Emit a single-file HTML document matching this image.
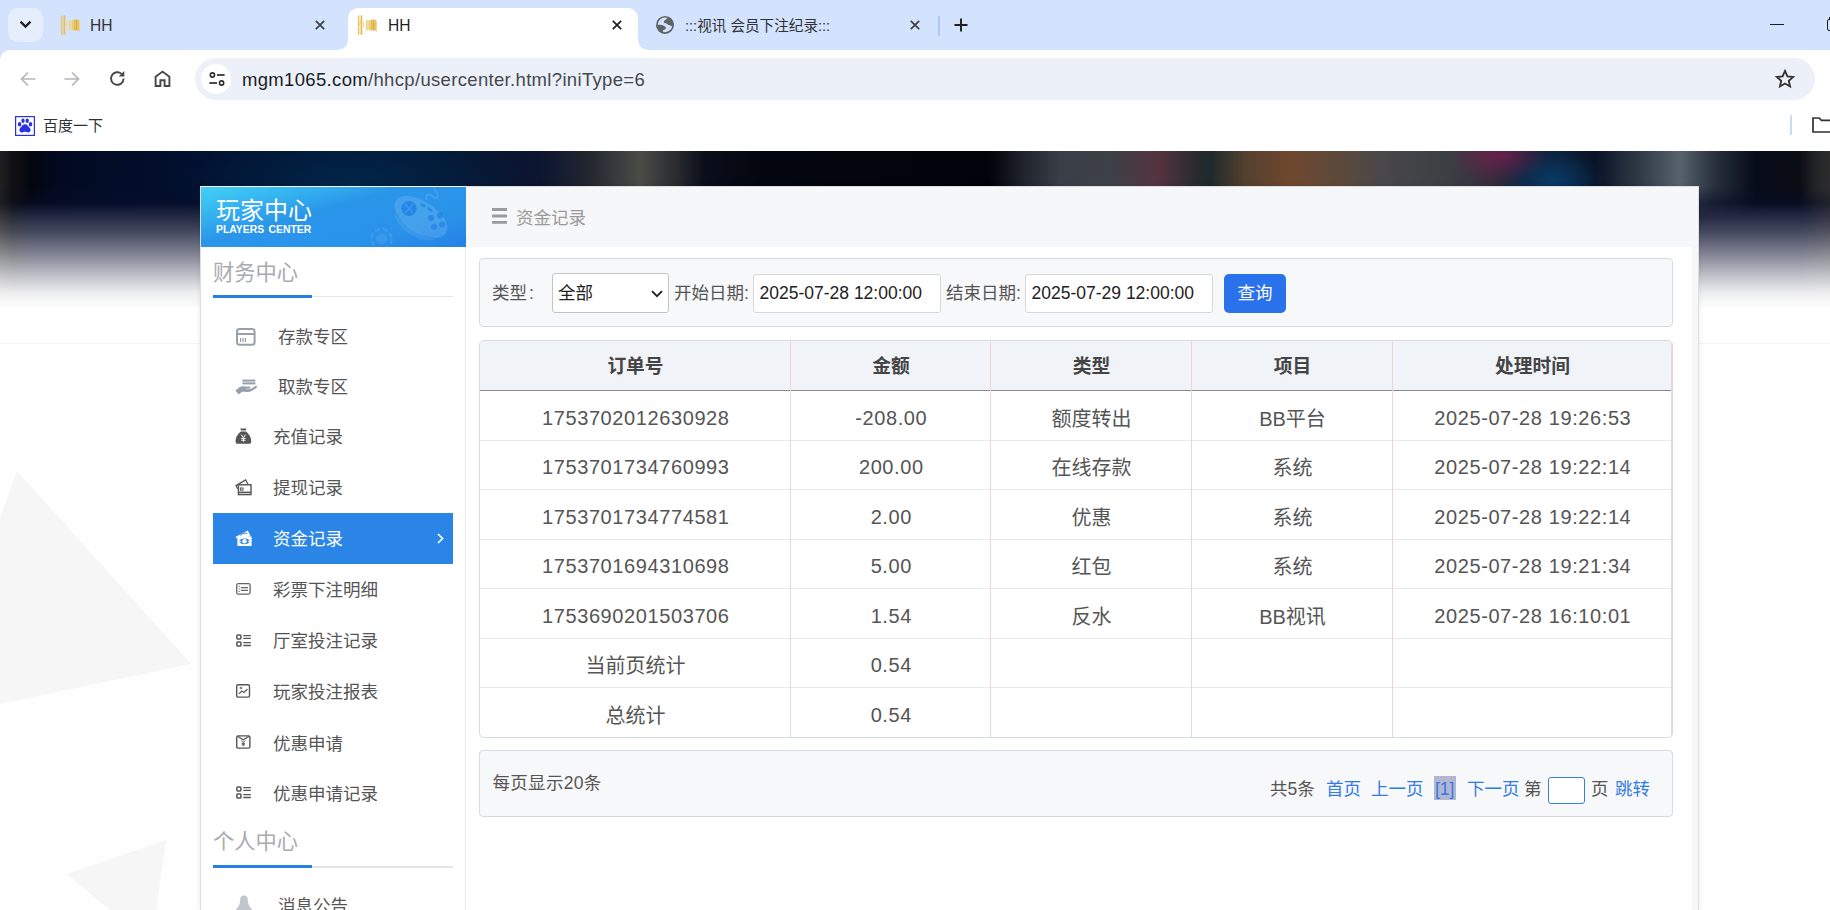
<!DOCTYPE html>
<html lang="zh-CN">
<head>
<meta charset="utf-8">
<title>HH</title>
<style>
*{box-sizing:border-box;margin:0;padding:0}
html,body{width:1830px;height:910px;overflow:hidden;background:#fff}
body{position:relative;font-family:"Liberation Sans","Noto Sans CJK SC",sans-serif;color:#555;-webkit-font-smoothing:antialiased}
.abs{position:absolute}
svg{display:block;position:absolute;overflow:visible}
/* ---------- browser chrome ---------- */
#tabstrip{left:0;top:0;width:1830px;height:64px;background:#d3e3fd}
#toolbar{left:0;top:50px;width:1830px;height:101px;background:#fff;border-top-left-radius:10px}
#tabsearch{left:8px;top:8px;width:35px;height:34px;border-radius:10px;background:#e6edfc}
.tabtxt{top:15.5px;height:20px;line-height:20px;font-size:15.6px;color:#303133;white-space:nowrap}
#acttab{left:348px;top:8px;width:290px;height:42px;background:#fff;border-radius:10px 10px 0 0}
.flare{width:10px;height:10px;top:40px;background:#fff}
.flare i{display:block;width:10px;height:10px;background:#d3e3fd}
#omni{left:195px;top:58px;width:1620px;height:41.5px;border-radius:21px;background:#ecf0f9}
#siteinfo{left:201px;top:64px;width:30px;height:30px;border-radius:15px;background:#fff}
#url{left:242px;top:68px;height:24px;line-height:24px;font-size:18.5px;color:#45484d;white-space:nowrap;letter-spacing:.33px}
#url b{font-weight:normal;color:#1b1c1f}
#bm{left:43px;top:116px;height:20px;line-height:20px;font-size:15px;color:#303133;white-space:nowrap}
/* ---------- page ---------- */
#page{left:0;top:151px;width:1830px;height:759px;background:#fefefe;overflow:hidden}
#banner{left:0;top:0;width:1830px;height:192px}
#banner{background:
 linear-gradient(to right,rgba(30,30,32,.9) 0,rgba(14,14,18,.6) 12px,rgba(8,10,20,0) 32px,rgba(8,10,20,0) 1802px,rgba(36,36,38,.55) 1830px),
 linear-gradient(to bottom,rgba(7,13,42,0) 0,rgba(7,13,42,0) 36px,rgba(7,13,42,.5) 50px,rgba(7,13,42,1) 66px,rgba(7,13,42,1) 100%),
 radial-gradient(ellipse 50px 26px at 1500px 4px,rgba(120,30,80,.75),rgba(120,30,80,0) 100%),
 radial-gradient(ellipse 50px 30px at 1555px 30px,rgba(8,62,110,.8),rgba(8,62,110,0) 100%),
 radial-gradient(ellipse 170px 70px at 350px 34px,rgba(0,44,80,.75),rgba(0,44,80,0) 100%),
 linear-gradient(to right,#2c2c2e 0,#101114 14px,#04060f 30px,#020a22 60px,#021030 200px,#031634 420px,#0c1530 540px,#23272f 590px,#4b4c47 640px,#2a2c30 675px,#0a0e1a 705px,#04060f 760px,#02030a 990px,#1c2028 1020px,#3a3f47 1060px,#3e4148 1110px,#55343f 1158px,#2a2a2e 1195px,#1d2a2b 1210px,#54402f 1245px,#70472f 1290px,#5c4a3b 1340px,#48474a 1385px,#3b3e43 1450px,#3a2c3c 1490px,#14233c 1525px,#0b2440 1555px,#091226 1595px,#2c3642 1635px,#57626d 1680px,#27303c 1715px,#070b1a 1755px,#0b0d14 1800px,#363636 1830px)}#fade{left:0;top:0;width:1830px;height:192px;background:linear-gradient(to bottom,rgba(255,255,255,0) 0,rgba(255,255,255,0) 52px,rgba(255,255,255,.26) 82px,rgba(255,255,255,.5) 104px,rgba(255,255,255,.76) 126px,rgba(255,255,255,.93) 142px,#fff 158px,#fff 100%)}
/* ---------- container ---------- */
#wrap{left:200px;top:186px;width:1499px;height:724px;background:#f6f7f9;border-top:1px solid #dcdddf;border-right:1px solid #dedede;box-shadow:0 0 5px rgba(0,0,0,.09)}
#side{left:200px;top:186px;width:266px;height:724px;background:#fff;border-left:1px solid #dedede;border-right:1px solid #e9ebee}
#logo{left:201px;top:186.600px;width:265px;height:60.4px;background:linear-gradient(165deg,#43d0f6 0,#35b4f0 22%,#2a96ea 42%,#2992e9 75%,#2480e6 100%);overflow:hidden}
#logo .t1{left:15px;top:9px;font-size:24px;line-height:30px;color:#fff;white-space:nowrap}
#logo .t2{left:15px;top:36px;font-size:10.4px;line-height:14px;color:#fff;white-space:nowrap;letter-spacing:0;word-spacing:1.5px;font-weight:bold}
.sect{left:213px;height:30px;line-height:30px;font-size:21.25px;color:#a9abb0;white-space:nowrap}
.sline{left:213px;width:240px;height:1px;background:#e3e4e6}
.sline i{display:block;position:absolute;left:0;top:-1.1px;width:98.500px;height:2.6px;background:#2a7de4}
.mi{left:213px;width:240px;height:51px;line-height:51px;font-size:17.5px;color:#555;white-space:nowrap}
.mi span{position:absolute;top:0}
.mi.on{background:#2a85e6;color:#fff}
#main{left:466px;top:247px;width:1226px;height:663px;background:#fff}
#mh{left:516px;top:203px;height:30px;line-height:30px;font-size:17.5px;color:#9a9a9a;white-space:nowrap}
.box{left:479px;width:1194px;background:#f7f8fa;border:1px solid #d6dbe1;border-radius:4px}
.lab{top:277.7px;height:30px;line-height:30px;font-size:17.5px;color:#555;white-space:nowrap}
.inp{top:274px;height:38.5px;background:#fff;border:1px solid #d6d8db;border-radius:3px;font-size:17.5px;line-height:36px;color:#222;padding-left:5.5px;white-space:nowrap}
#btn{left:1224px;top:274px;width:62px;height:39px;border-radius:5px;background:#2a71ec;color:#fff;font-size:17.5px;line-height:39px;text-align:center}
/* ---------- table ---------- */
#tb{left:479px;top:340px;width:1194px;height:398px;background:#fff;border:1px solid #d6dbe1;border-radius:5px;overflow:hidden}
#th{left:0;top:0;width:1192px;height:50.3px;background:#f0f3f7;border-bottom:1.4px solid #8f898c}
.vl{top:0;width:1px;height:398px;background:#f1d3d5}
.hl{left:0;width:1192px;height:1px;background:#e9e9ea}
.c{height:30px;line-height:30px;text-align:center;white-space:nowrap;font-size:20px;color:#555}
.c{margin-top:2px}
.c.h{font-size:18.75px;font-weight:bold;color:#444;margin-top:.8px}
.c.n{letter-spacing:.6px;margin-top:1px;padding-left:.6px}
.c1{left:0;width:311px}.c2{left:311px;width:200px}.c3{left:511px;width:201px}.c4{left:712px;width:201px}.c5{left:913px;width:279px}
.pg{top:774px;height:30px;line-height:30px;font-size:17.5px;color:#555;white-space:nowrap}
.pg.a{color:#347ae6}
</style>
</head>
<body>
<!-- ======= CHROME ======= -->
<div id="tabstrip" class="abs"></div>
<div id="toolbar" class="abs"></div>
<div id="tabsearch" class="abs"></div>
<div id="acttab" class="abs"></div>
<div id="omni" class="abs"></div>
<div id="siteinfo" class="abs"></div>
<div id="url" class="abs"><b>mgm1065.com</b>/hhcp/usercenter.html?iniType=6</div>
<div id="bm" class="abs">百度一下</div>
<div class="abs flare" style="left:338px"><i style="border-bottom-right-radius:10px"></i></div>
<div class="abs flare" style="left:638px"><i style="border-bottom-left-radius:10px"></i></div>
<!-- tab search chevron -->
<svg style="left:19px;top:20px" width="13" height="9" viewBox="0 0 13 9"><path d="M1.5 1.6 L6.5 6.6 L11.5 1.6" fill="none" stroke="#1f1f1f" stroke-width="2.2"/></svg>
<!-- favicons -->
<svg class="fav" style="left:60px;top:15px" width="21" height="21" viewBox="0 0 21 21"><g fill="none" stroke-linecap="butt"><rect x="9" y="5.2" width="10.600" height="10" rx="1.5" fill="#f1e2b0" fill-opacity=".85" stroke="none"/><path d="M1.600 0.4 V19.800" stroke="#e9c664" stroke-width="1.500"/><path d="M4.400 0.4 V19.800" stroke="#e6be52" stroke-width="1.800"/><path d="M2.200 10 L4 6" stroke="#ecd084" stroke-width="1.200"/><path d="M6.600 6.500 V12.500" stroke="#f0dc9e" stroke-width="1.100"/><path d="M9.700 5 V15.600" stroke="#ebcd7c" stroke-width="1.200"/><path d="M11.400 6 V14.500" stroke="#efd896" stroke-width="1"/><path d="M13 5.200 V15.200" stroke="#e6c25c" stroke-width="1.200"/><path d="M14.700 4.600 V15.600" stroke="#e2b848" stroke-width="1.300"/><path d="M16.400 4.600 V15.400" stroke="#dcab2e" stroke-width="1.500"/><path d="M18.100 4.800 V15.800" stroke="#e2b644" stroke-width="1.300"/><path d="M19.500 5.500 V16.500" stroke="#ecd48e" stroke-width=".9"/></g></svg>
<svg class="fav" style="left:357px;top:15px" width="21" height="21" viewBox="0 0 21 21"><g fill="none" stroke-linecap="butt"><rect x="9" y="5.2" width="10.600" height="10" rx="1.5" fill="#f1e2b0" fill-opacity=".85" stroke="none"/><path d="M1.600 0.4 V19.800" stroke="#e9c664" stroke-width="1.500"/><path d="M4.400 0.4 V19.800" stroke="#e6be52" stroke-width="1.800"/><path d="M2.200 10 L4 6" stroke="#ecd084" stroke-width="1.200"/><path d="M6.600 6.500 V12.500" stroke="#f0dc9e" stroke-width="1.100"/><path d="M9.700 5 V15.600" stroke="#ebcd7c" stroke-width="1.200"/><path d="M11.400 6 V14.500" stroke="#efd896" stroke-width="1"/><path d="M13 5.200 V15.200" stroke="#e6c25c" stroke-width="1.200"/><path d="M14.700 4.600 V15.600" stroke="#e2b848" stroke-width="1.300"/><path d="M16.400 4.600 V15.400" stroke="#dcab2e" stroke-width="1.500"/><path d="M18.100 4.800 V15.800" stroke="#e2b644" stroke-width="1.300"/><path d="M19.500 5.500 V16.500" stroke="#ecd48e" stroke-width=".9"/></g></svg>
<div class="abs tabtxt" style="left:90px">HH</div>
<div class="abs tabtxt" style="left:388px;color:#1f1f1f">HH</div>
<div class="abs tabtxt" style="left:685px;font-size:14.6px">:::视讯 会员下注纪录:::</div>
<!-- close X -->
<svg style="left:315px;top:20px" width="10" height="10" viewBox="0 0 10 10"><path d="M0.8 0.8 L9.2 9.2 M9.2 0.8 L0.8 9.2" stroke="#3c4043" stroke-width="1.7" fill="none"/></svg>
<svg style="left:612px;top:20px" width="10" height="10" viewBox="0 0 10 10"><path d="M0.8 0.8 L9.2 9.2 M9.2 0.8 L0.8 9.2" stroke="#1f1f1f" stroke-width="1.7" fill="none"/></svg>
<svg style="left:910px;top:20px" width="10" height="10" viewBox="0 0 10 10"><path d="M0.8 0.8 L9.2 9.2 M9.2 0.8 L0.8 9.2" stroke="#3c4043" stroke-width="1.7" fill="none"/></svg>
<!-- globe -->
<svg style="left:656px;top:16px" width="18" height="18" viewBox="0 0 18 18"><defs><clipPath id="gc"><circle cx="9" cy="8.9" r="8.6"/></clipPath></defs><circle cx="9" cy="8.9" r="8.150" fill="none" stroke="#5f6368" stroke-width="1.700"/><g clip-path="url(#gc)" fill="#5f6368"><path d="M7.500 6.200 C8 4.600 9.200 3.600 10.200 3.400 C10.600 2.400 11.800 1.600 13 1.400 L19 2 L19 8.500 L17.600 8.600 C16.800 10.300 15 10.300 13.600 9.300 C12.400 8.500 11 8.400 10.600 7.400 C9.600 7.300 8.200 7.200 7.500 6.200 Z"/><path d="M-1 9.700 C1.500 8.600 3.800 8.700 5.400 9 C7.200 9.300 9 10 9.700 11.600 C10.100 12.700 9.400 13.500 8.200 13.700 C7 13.900 6.600 14.600 6.800 15.600 C7 16.500 8 17.200 9 17.600 L4 19 L-1 15 Z"/></g></svg>
<div class="abs" style="left:938px;top:16px;width:2px;height:20px;background:#a8c7fa;border-radius:1px"></div>
<svg style="left:954px;top:18px" width="14" height="14" viewBox="0 0 14 14"><path d="M7 0.5 V13.5 M0.5 7 H13.5" stroke="#1f1f1f" stroke-width="1.9" fill="none"/></svg>
<!-- window controls -->
<div class="abs" style="left:1770px;top:24px;width:14px;height:1.3px;background:#1f1f1f"></div>
<div class="abs" style="left:1827px;top:19px;width:12px;height:12px;border:1.3px solid #1f1f1f;border-radius:2px"></div>
<div class="abs" style="left:1829px;top:17px;width:3px;height:3px;background:#1f1f1f"></div>
<!-- nav icons -->
<svg style="left:20px;top:71px" width="16" height="16" viewBox="0 0 16 16"><path d="M15.5 8 H1.8 M8 1.5 L1.5 8 L8 14.5" stroke="#b4b6ba" stroke-width="1.7" fill="none"/></svg>
<svg style="left:64px;top:71px" width="16" height="16" viewBox="0 0 16 16"><path d="M0.5 8 H14.2 M8 1.5 L14.5 8 L8 14.5" stroke="#b4b6ba" stroke-width="1.7" fill="none"/></svg>
<svg style="left:109px;top:70px" width="17" height="17" viewBox="0 0 17 17"><path d="M14.6 8.5 A6.3 6.3 0 1 1 12.6 3.9" stroke="#474747" stroke-width="1.9" fill="none"/><path d="M15.3 1 V6.6 H9.7 Z" fill="#474747"/></svg>
<svg style="left:154px;top:70px" width="17" height="17" viewBox="0 0 17 17"><path d="M1.6 16 V6.8 L8.5 1.6 L15.4 6.8 V16 H10.6 V10.2 H6.4 V16 Z" stroke="#474747" stroke-width="1.9" fill="none" stroke-linejoin="miter"/></svg>
<!-- site info tune icon -->
<svg style="left:208.500px;top:72px" width="16" height="14" viewBox="0 0 16 14"><circle cx="3.4" cy="3" r="2.1" fill="none" stroke="#2b2c2f" stroke-width="1.6"/><path d="M8 3 H15.6" stroke="#2b2c2f" stroke-width="1.7"/><circle cx="12.6" cy="11" r="2.1" fill="none" stroke="#2b2c2f" stroke-width="1.6"/><path d="M0.4 11 H8" stroke="#2b2c2f" stroke-width="1.7"/></svg>
<!-- star -->
<svg style="left:1775px;top:69px" width="20" height="19" viewBox="0 0 20 19"><path d="M10 1.9 L12.4 7.3 L18.2 7.9 L13.8 11.8 L15.1 17.5 L10 14.5 L4.9 17.5 L6.2 11.8 L1.8 7.9 L7.6 7.3 Z" stroke="#303134" stroke-width="1.8" fill="none" stroke-linejoin="miter"/></svg>
<!-- bookmark icon -->
<svg style="left:15px;top:116px" width="20" height="20" viewBox="0 0 20 20"><rect x="0.6" y="0.6" width="18.8" height="18.8" fill="#fff" stroke="#2932e1" stroke-width="1.2"/><g fill="#2932e1"><ellipse cx="4.6" cy="8.2" rx="1.7" ry="2.2"/><ellipse cx="8" cy="4.8" rx="1.7" ry="2.2"/><ellipse cx="12.2" cy="4.8" rx="1.7" ry="2.2"/><ellipse cx="15.5" cy="8.2" rx="1.7" ry="2.2"/><path d="M10 8.2 C12.2 8.2 13.2 10.4 14.8 12 C16.4 13.8 15.4 16.6 13 16.4 C11.6 16.2 11 15.8 10 15.8 C9 15.8 8.4 16.2 7 16.4 C4.6 16.6 3.6 13.8 5.2 12 C6.8 10.4 7.8 8.2 10 8.2 Z"/></g></svg>
<div class="abs" style="left:1790px;top:115px;width:2px;height:20px;background:#c7dafc;border-radius:1px"></div>
<svg style="left:1812px;top:116px" width="22" height="18" viewBox="0 0 22 18"><path d="M1 2 H7.2 L9.4 4.4 H21 V16 H1 Z" stroke="#303134" stroke-width="1.7" fill="none"/></svg>

<!-- ======= PAGE ======= -->
<div id="page" class="abs">
<svg style="left:0;top:0" width="1830" height="759" viewBox="0 151 1830 759"><polygon points="17,471 191,664 0,704 0,518" fill="#f6f6f6"/><polygon points="166,840 67,874 112,912 156,912" fill="#f6f6f6"/><rect x="0" y="343" width="1830" height="1" fill="#f4f4f4"/></svg>
<div id="banner" class="abs"></div>
<div id="fade" class="abs"></div>
</div>

<div id="wrap" class="abs"></div>
<div id="side" class="abs"></div>
<div id="logo" class="abs"><svg style="left:0;top:0" width="265" height="61" viewBox="0 0 265 61"><g transform="translate(-201,-186)">
<g transform="rotate(33 421 216)"><ellipse cx="421" cy="216" rx="30" ry="15.5" fill="#fff" fill-opacity=".13"/><path d="M396 226 C404 240 438 240 446 226 C440 232 402 232 396 226 Z" fill="#fff" fill-opacity=".08"/></g>
<path d="M427 199 C425 194 428 192 432 195 C436 198 440 198 437 192 L434 187" fill="none" stroke="#fff" stroke-opacity=".13" stroke-width="1.6"/>
<circle cx="409" cy="207.5" r="7.6" fill="#1f7fe4" fill-opacity=".8"/>
<path d="M405 203 L413 212 M413 203 L405 212" stroke="#3ba4ec" stroke-width="1.6" stroke-opacity=".7"/>
<path d="M421 203 L425 205.5 M427.500 207 L432 210" stroke="#1f7fe4" stroke-opacity=".75" stroke-width="2.2"/>
<circle cx="431" cy="217" r="3" fill="#1f7fe4" fill-opacity=".7"/><circle cx="440" cy="214.500" r="3" fill="#1f7fe4" fill-opacity=".7"/><circle cx="434" cy="226" r="3" fill="#1f7fe4" fill-opacity=".6"/><circle cx="442" cy="223.500" r="3" fill="#1f7fe4" fill-opacity=".6"/>
<circle cx="381.500" cy="238" r="10" fill="none" stroke="#fff" stroke-opacity=".09" stroke-width="2.5" stroke-dasharray="5 3"/><circle cx="381.500" cy="238" r="5.500" fill="#fff" fill-opacity=".08"/>
</g></svg><div class="abs t1">玩家中心</div><div class="abs t2">PLAYERS CENTER</div></div>
<div class="abs sect" style="top:258px">财务中心</div>
<div class="abs sline" style="top:296.4px"><i></i></div>
<div class="abs mi" style="top:312px"><span style="left:65px">存款专区</span></div>
<div class="abs mi" style="top:361.6px"><span style="left:65px">取款专区</span></div>
<div class="abs mi" style="top:412px"><span style="left:60px">充值记录</span></div>
<div class="abs mi" style="top:463px"><span style="left:60px">提现记录</span></div>
<div class="abs mi on" style="top:513px"><span style="left:60px;top:1px">资金记录</span></div>
<div class="abs mi" style="top:565px"><span style="left:60px">彩票下注明细</span></div>
<div class="abs mi" style="top:616px"><span style="left:60px">厅室投注记录</span></div>
<div class="abs mi" style="top:666.6px"><span style="left:60px">玩家投注报表</span></div>
<div class="abs mi" style="top:718.5px"><span style="left:60px">优惠申请</span></div>
<div class="abs mi" style="top:769.3px"><span style="left:60px">优惠申请记录</span></div>
<div class="abs sect" style="top:827px">个人中心</div>
<div class="abs sline" style="top:866.4px;height:1.3px"><i style="top:-1.5px;height:3px"></i></div>
<div class="abs mi" style="top:880.5px"><span style="left:65px">消息公告</span></div>

<!-- sidebar icons -->
<svg style="left:236px;top:328px" width="20" height="18" viewBox="0 0 20 18"><rect x="1" y="1" width="17.6" height="15.8" rx="2.6" fill="none" stroke="#97a0aa" stroke-width="2"/><path d="M1 6 H18.6" stroke="#97a0aa" stroke-width="2"/><path d="M4.6 10 V14 M7 10 V14 M9.4 10 V14" stroke="#97a0aa" stroke-width="1.2"/></svg>
<svg style="left:235px;top:379px" width="23" height="17" viewBox="0 0 23 17"><rect x="7.4" y="0.6" width="13" height="2" fill="#97a0aa"/><rect x="7.4" y="3.4" width="13" height="2" fill="#97a0aa"/><path d="M0.4 11.6 L3.2 9.2 C5 7.6 7 7.2 9.4 7.4 L14.4 7.6 C15.6 7.8 15.6 9.4 14.4 9.6 L10 10 C12.6 10.6 15 10.4 17 9.2 L20.6 6.8 C21.8 6.2 22.6 7.4 21.6 8.4 C19 11 16 12.8 12.6 13 C10.4 13.2 8.4 12.6 6.8 13 L3.6 15.6 Z" fill="#97a0aa"/></svg>
<svg style="left:235px;top:428px" width="17" height="16" viewBox="0 0 17 16"><path d="M5.2 0.4 H11.6 L10.6 2.6 H6.2 Z" fill="#555"/><path d="M6 3.4 H10.8 C13.6 5.4 16.4 9 16.2 13.4 C16.2 14.8 15.4 15.8 14 15.8 H2.8 C1.4 15.8 0.6 14.8 0.6 13.4 C0.4 9 3.2 5.4 6 3.4 Z" fill="#555"/><path d="M6.2 6.6 L8.4 9.6 L10.6 6.6 M8.4 9.6 V13.8 M6.2 10.4 H10.6 M6.2 12.2 H10.6" stroke="#fff" stroke-width="1" fill="none"/></svg>
<svg style="left:235px;top:479px" width="17" height="17" viewBox="0 0 17 17"><path d="M2.6 9.8 L1 6.6 L10.6 1 L13 5.2" fill="none" stroke="#555" stroke-width="1.3"/><rect x="3.4" y="5.8" width="12.6" height="9.8" fill="#fff" stroke="#555" stroke-width="1.4"/><path d="M3.4 13.4 H16" stroke="#555" stroke-width="1.6"/><rect x="5.4" y="9" width="2.6" height="2.2" fill="none" stroke="#555" stroke-width="1"/></svg>
<svg style="left:235px;top:530px" width="17" height="17" viewBox="0 0 17 17"><path d="M0.4 7 L12.8 0.6 L15.8 6.6 L2 8.6 Z" fill="#fff"/><path d="M5.2 5.4 C7.2 3.4 10.4 2.6 12.2 3.6" stroke="#2a85e6" stroke-width="1" fill="none"/><rect x="2.4" y="6.6" width="14.2" height="9.4" fill="#fff"/><ellipse cx="9.5" cy="11.3" rx="5.4" ry="2.9" fill="#2a85e6"/><ellipse cx="9.5" cy="11.3" rx="2.3" ry="2.3" fill="#fff"/><circle cx="5" cy="11.3" r="0.9" fill="#fff"/><circle cx="14" cy="11.3" r="0.9" fill="#fff"/></svg>
<svg style="left:437px;top:533px" width="7" height="11" viewBox="0 0 7 11"><path d="M1 1 L5.6 5.5 L1 10" stroke="#fff" stroke-width="1.7" fill="none"/></svg>
<svg style="left:236px;top:583px" width="15" height="12" viewBox="0 0 15 12"><rect x="0.700" y="0.700" width="13.400" height="10.400" rx="1.500" fill="none" stroke="#666" stroke-width="1.300"/><path d="M4.800 4.600 H12 M4.800 7.400 H12" stroke="#666" stroke-width="1.200"/><path d="M2.600 3.400 H3.800 M2.600 5.900 H3.800 M2.600 8.400 H3.800" stroke="#666" stroke-width="1"/></svg>
<svg style="left:236px;top:634px" width="16" height="13" viewBox="0 0 16 13"><g fill="none" stroke="#555" stroke-width="1.5"><rect x="0.9" y="0.9" width="4" height="4" rx="0.8"/><rect x="0.9" y="8" width="4" height="4" rx="0.8"/></g><path d="M7.3 1.6 H14.8 M7.3 4.4 H14.8 M7.3 8.7 H14.8 M7.3 11.5 H14.8" stroke="#555" stroke-width="1.3"/></svg>
<svg style="left:236px;top:684px" width="15" height="14" viewBox="0 0 15 14"><rect x="0.7" y="0.7" width="12.8" height="12.4" rx="1.4" fill="none" stroke="#555" stroke-width="1.4"/><path d="M3 9.8 L5.8 7 L7.8 8.4 L11.4 5.2" fill="none" stroke="#555" stroke-width="1.2"/><circle cx="5" cy="4" r="0.9" fill="none" stroke="#555" stroke-width="0.9"/></svg>
<svg style="left:236px;top:735px" width="15" height="14" viewBox="0 0 15 14"><rect x="0.7" y="0.9" width="13.2" height="12.2" rx="1.4" fill="none" stroke="#555" stroke-width="1.4"/><path d="M1.4 1.2 L7.3 4.8 L13.2 1.2" fill="none" stroke="#555" stroke-width="1.2"/><path d="M5.4 5.4 L7.3 7.6 L9.2 5.4 M7.3 7.6 V11.2 M5.6 8.4 H9 M5.6 9.8 H9" fill="none" stroke="#555" stroke-width="0.9"/></svg>
<svg style="left:236px;top:786px" width="16" height="13" viewBox="0 0 16 13"><g fill="none" stroke="#555" stroke-width="1.5"><rect x="0.9" y="0.9" width="4" height="4" rx="0.8"/><rect x="0.9" y="8" width="4" height="4" rx="0.8"/></g><path d="M7.3 1.6 H14.8 M7.3 4.4 H14.8 M7.3 8.7 H14.8 M7.3 11.5 H14.8" stroke="#555" stroke-width="1.3"/></svg>
<svg style="left:235px;top:895px" width="18" height="16" viewBox="0 0 18 16"><path d="M9 0.4 C6.2 0.4 5.2 2.6 5.2 5 C5.2 8 4.4 11 1 14.6 V16 H17 V14.6 C13.6 11 12.8 8 12.8 5 C12.8 2.6 11.8 0.4 9 0.4 Z" fill="#c1c6cd"/></svg>
<div id="main" class="abs"></div>
<div id="mh" class="abs">资金记录</div>
<svg style="left:492px;top:207.5px" width="15" height="16" viewBox="0 0 15 16"><path d="M0 1.5 H15 M0 8 H15 M0 14.4 H15" stroke="#9a9a9a" stroke-width="2.9"/></svg>
<div class="abs box" style="top:258px;height:69px"></div>
<div class="abs lab" style="left:492px">类型<span style="margin-left:2px">:</span></div>
<div class="abs inp" style="left:552px;top:273px;width:117px;height:39.5px;border-color:#c3c4c6;color:#222;padding-left:5px;line-height:39px;border-radius:3px">全部</div>
<svg style="left:651px;top:289.800px" width="12" height="8" viewBox="0 0 12 8"><path d="M1 1.2 L6 6.2 L11 1.2" fill="none" stroke="#222" stroke-width="1.9"/></svg>
<div class="abs lab" style="left:674px">开始日期:</div>
<div class="abs inp" style="left:753px;width:188px">2025-07-28 12:00:00</div>
<div class="abs lab" style="left:946px">结束日期:</div>
<div class="abs inp" style="left:1025px;width:188px">2025-07-29 12:00:00</div>
<div id="btn" class="abs">查询</div>
<div id="tb" class="abs">
<div id="th" class="abs"></div>
<div class="abs c h c1" style="top:10px">订单号</div>
<div class="abs c h c2" style="top:10px">金额</div>
<div class="abs c h c3" style="top:10px">类型</div>
<div class="abs c h c4" style="top:10px">项目</div>
<div class="abs c h c5" style="top:10px">处理时间</div>
<div class="abs c c1 n" style="top:60.5px">1753702012630928</div>
<div class="abs c c2 n" style="top:60.5px">-208.00</div>
<div class="abs c c3" style="top:60.5px">额度转出</div>
<div class="abs c c4" style="top:60.5px">BB平台</div>
<div class="abs c c5 n" style="top:60.5px">2025-07-28 19:26:53</div>
<div class="abs hl" style="top:98.6px"></div>
<div class="abs c c1 n" style="top:110.0px">1753701734760993</div>
<div class="abs c c2 n" style="top:110.0px">200.00</div>
<div class="abs c c3" style="top:110.0px">在线存款</div>
<div class="abs c c4" style="top:110.0px">系统</div>
<div class="abs c c5 n" style="top:110.0px">2025-07-28 19:22:14</div>
<div class="abs hl" style="top:148.2px"></div>
<div class="abs c c1 n" style="top:159.6px">1753701734774581</div>
<div class="abs c c2 n" style="top:159.6px">2.00</div>
<div class="abs c c3" style="top:159.6px">优惠</div>
<div class="abs c c4" style="top:159.6px">系统</div>
<div class="abs c c5 n" style="top:159.6px">2025-07-28 19:22:14</div>
<div class="abs hl" style="top:197.7px"></div>
<div class="abs c c1 n" style="top:209.1px">1753701694310698</div>
<div class="abs c c2 n" style="top:209.1px">5.00</div>
<div class="abs c c3" style="top:209.1px">红包</div>
<div class="abs c c4" style="top:209.1px">系统</div>
<div class="abs c c5 n" style="top:209.1px">2025-07-28 19:21:34</div>
<div class="abs hl" style="top:247.2px"></div>
<div class="abs c c1 n" style="top:258.6px">1753690201503706</div>
<div class="abs c c2 n" style="top:258.6px">1.54</div>
<div class="abs c c3" style="top:258.6px">反水</div>
<div class="abs c c4" style="top:258.6px">BB视讯</div>
<div class="abs c c5 n" style="top:258.6px">2025-07-28 16:10:01</div>
<div class="abs hl" style="top:296.8px"></div>
<div class="abs c c1" style="top:308.1px">当前页统计</div>
<div class="abs c c2 n" style="top:308.1px">0.54</div>
<div class="abs hl" style="top:346.3px"></div>
<div class="abs c c1" style="top:357.7px">总统计</div>
<div class="abs c c2 n" style="top:357.7px">0.54</div>
<div class="abs vl" style="left:310px"></div>
<div class="abs vl" style="left:510px"></div>
<div class="abs vl" style="left:711px"></div>
<div class="abs vl" style="left:912px"></div>
<div class="abs vl" style="left:1191px"></div>
</div>
<div class="abs box" style="top:750px;height:67px"></div>
<div class="abs pg" style="left:492.500px;top:767.5px;letter-spacing:.3px">每页显示20条</div>
<div class="abs pg" style="left:1270px">共5条</div>
<div class="abs pg a" style="left:1326px">首页</div>
<div class="abs pg a" style="left:1371px">上一页</div>
<div class="abs" style="left:1434px;top:776px;width:22px;height:24px;background:#b3b5d1"></div>
<div class="abs pg a" style="left:1435px">[1]</div>
<div class="abs pg a" style="left:1467px">下一页</div>
<div class="abs pg" style="left:1524px">第</div>
<div class="abs" style="left:1548px;top:777px;width:37px;height:27px;background:#fff;border:1.5px solid #3a7be8;border-radius:3px"></div>
<div class="abs pg" style="left:1591px">页</div>
<div class="abs pg a" style="left:1615px">跳转</div>
</body>
</html>
